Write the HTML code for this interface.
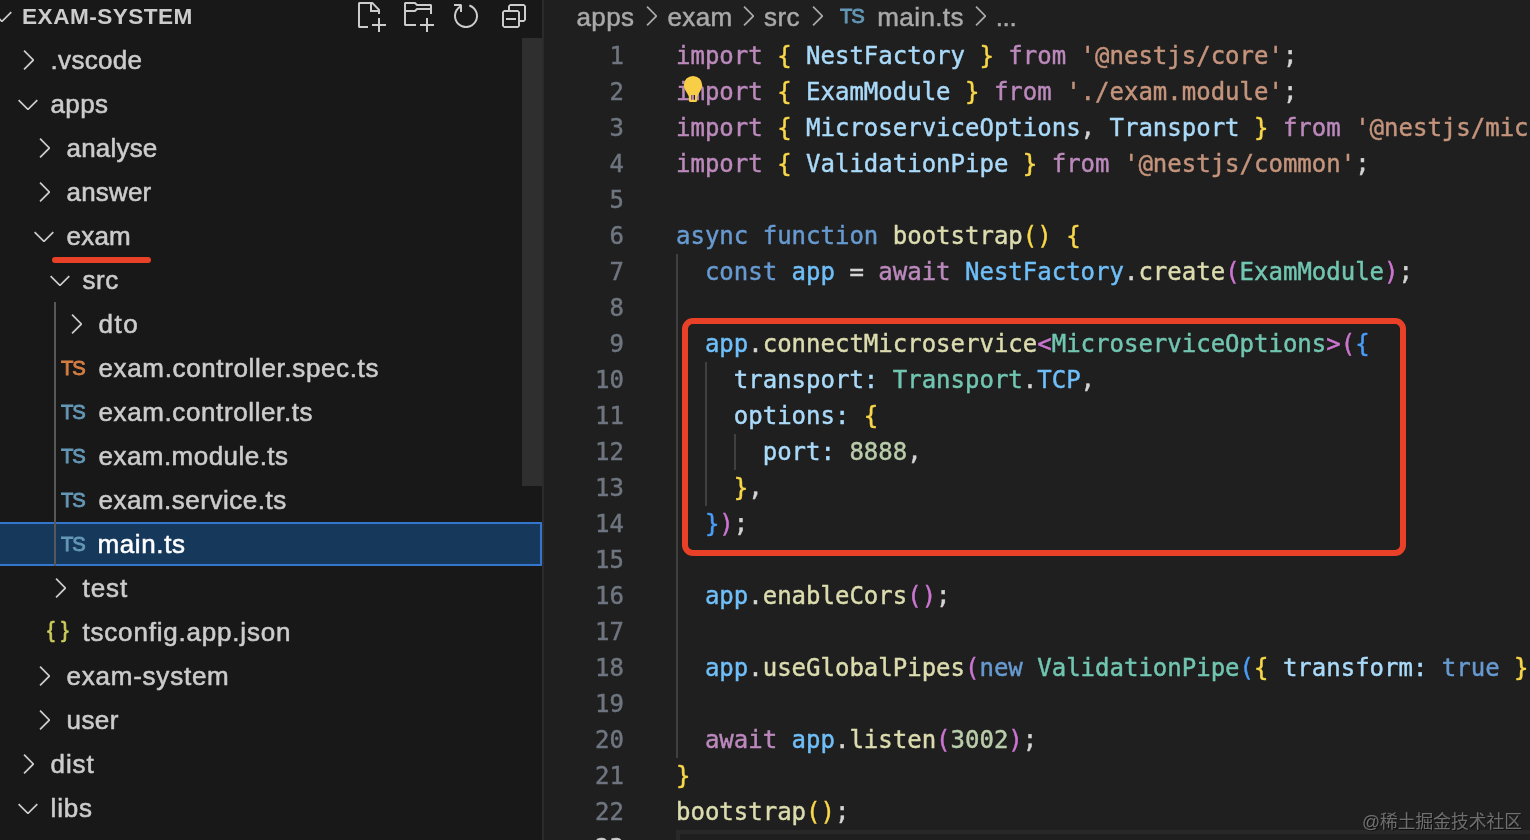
<!DOCTYPE html>
<html lang="en"><head><meta charset="utf-8"><title>main.ts — exam-system</title>
<style>
html,body{margin:0;padding:0}
body{width:1530px;height:840px;overflow:hidden;position:relative;background:#1f1f1f;font-family:"Liberation Sans","DejaVu Sans",sans-serif}
#sidebg{position:absolute;left:0;top:0;width:542px;height:840px;background:#181818}
#side{position:absolute;left:0;top:0;width:542px;height:840px;overflow:hidden}
#sideborder{position:absolute;left:542px;top:0;width:2px;height:840px;background:#2b2b2b}
#scroll{position:absolute;left:522px;top:38px;width:20px;height:448px;background:#2f2f2f}
.ic{position:absolute;display:block}
.lbl{position:absolute;height:44px;line-height:44px;margin-top:0.45px;font-size:26px;color:#cccccc;white-space:pre;-webkit-text-stroke:0.55px #cccccc}
.selt{color:#ffffff;-webkit-text-stroke-color:#ffffff;margin-left:-1px}
.selrow{position:absolute;left:-2px;width:540px;height:40px;background:#16385b;border:2px solid #3376cd}
.tsic{position:absolute;height:44px;line-height:43px;margin-top:0.5px;font-size:20.2px;letter-spacing:-1.2px;white-space:pre;-webkit-text-stroke-width:0.9px}
.jsic{position:absolute;height:44px;line-height:39.6px;font-size:22px;-webkit-text-stroke-width:0.7px;color:#cbcb5a;white-space:pre}
#hdr{position:absolute;left:22.1px;top:-5.5px;height:44px;line-height:44px;font-size:22.6px;font-weight:bold;color:#cccccc;letter-spacing:0.45px;white-space:pre}
#guide{position:absolute;left:54px;top:302px;width:2px;height:264px;background:#585858}
#redline{position:absolute;left:52px;top:256.7px;width:99px;height:6.6px;border-radius:3.3px;background:#e94127}
#ed{position:absolute;left:544px;top:0;width:986px;height:840px;overflow:hidden}
.ln,.cl{position:absolute;height:36px;line-height:36px;font-family:"DejaVu Sans Mono","Liberation Mono",monospace;font-size:24px;white-space:pre;-webkit-text-stroke-width:0.45px}
.ln{left:523.9px;width:100px;text-align:right;color:#6f7680}
.ln.act{color:#cccccc}
.cl{left:676.0px;color:#d4d4d4}
.kw{color:#bc89bd}
.g{color:#f9d849}
.o{color:#cc76d1}
.b{color:#4a9df8}
.v{color:#aadafa}
.s{color:#c5947c}
.f{color:#dcdcaf}
.t{color:#71c6b1}
.st{color:#679ad1}
.n{color:#bacdab}
.c{color:#6fbff9}
.p{color:#d4d4d4}
.ig{position:absolute;width:2px;background:#404040}
#redbox{position:absolute;left:682px;top:317.5px;width:712.4px;height:226px;border:6px solid #e94127;border-radius:11px}
.bc{position:absolute;top:-5px;height:44px;line-height:44px;font-size:26px;color:#a9a9a9;white-space:pre;letter-spacing:0.4px;-webkit-text-stroke:0.5px #a9a9a9}
#wm{position:absolute;left:1362px;top:809.3px;font-family:"Liberation Sans","Noto Sans CJK SC",sans-serif;font-size:17.75px;line-height:26px;color:rgba(255,255,255,0.37);text-shadow:1px 1px 0 rgba(0,0,0,0.55);white-space:pre}
#curline{position:absolute;left:675.6px;top:829.5px;width:900px;height:36px;border:4px solid #282828;box-sizing:border-box}
#root{position:absolute;left:0;top:0;width:1530px;height:840px;will-change:transform}
</style></head><body>
<div id="sidebg"></div>
<div id="root">
<div id="side">
<svg class="ic" style="left:-14px;top:0px" width="32" height="32" viewBox="0 0 16 16"><path fill="#cccccc" d="M7.976 10.072l4.357-4.357.62.618L8.284 11h-.618L3 6.333l.619-.618 4.357 4.357z"/></svg>
<div id="hdr">EXAM-SYSTEM</div>
<svg class="ic" style="left:354px;top:0" width="32" height="32" viewBox="0 0 16 16"><path fill="#cccccc" fill-rule="evenodd" clip-rule="evenodd" d="M9.5 1.1L12.9 4.6L13 5V7H12V6H8V2H3V13H7V14H2.5L2 13.5V1.5L2.5 1H9.2L9.5 1.1ZM9 2V5H11.9L9 2ZM13 16H12V13H9V12H12V9H13V12H16V13H13V16Z"/></svg>
<svg class="ic" style="left:402px;top:0" width="32" height="32" viewBox="0 0 16 16"><path fill="#cccccc" fill-rule="evenodd" clip-rule="evenodd" d="M14.5 2H7.71L6.86 1.15L6.51 1H1.51L1.01 1.5V12.5L1.51 13H7V12H1.99V6H6.49L6.84 5.85L7.7 4.99H14V6.49L13.999 7H15.01V2.5L14.5 2ZM13.99 4H7.49L7.14 4.15L6.28 5.01H2V2.01H6.29L7.14 2.86L7.5 3.01H14L13.99 4ZM13 16H12V13H9V12H12V9H13V12H16V13H13V16Z"/></svg>
<svg class="ic" style="left:450px;top:0" width="32" height="32" viewBox="0 0 16 16"><path fill="#cccccc" fill-rule="evenodd" clip-rule="evenodd" d="M4.681 3H2V2h3.5l.5.5V6H5V4a5 5 0 1 0 4.53-.761l.302-.954A6 6 0 1 1 4.681 3z"/></svg>
<svg class="ic" style="left:498px;top:0" width="32" height="32" viewBox="0 0 16 16"><path fill="#cccccc" d="M9 9H4V10H9V9Z"/><path fill="#cccccc" fill-rule="evenodd" clip-rule="evenodd" d="M5 3L6 2H13L14 3V10L13 11H11V13L10 14H3L2 13V6L3 5H5V3ZM6 5H10L11 6V10H13V3H6V5ZM10 6H3V13H10V6Z"/></svg>
<div id="scroll"></div>
<svg class="ic" style="left:12px;top:44px" width="32" height="32" viewBox="0 0 16 16"><path fill="#cccccc" d="M10.072 8.024L5.715 3.667l.618-.62L11 7.716v.618L6.333 13l-.618-.619 4.357-4.357z"/></svg>
<div class="lbl" id="l0" style="left:50.5px;top:38px;letter-spacing:0.33px">.vscode</div>
<svg class="ic" style="left:12px;top:88px" width="32" height="32" viewBox="0 0 16 16"><path fill="#cccccc" d="M7.976 10.072l4.357-4.357.62.618L8.284 11h-.618L3 6.333l.619-.618 4.357 4.357z"/></svg>
<div class="lbl" id="l1" style="left:50.5px;top:82px;letter-spacing:0.4px">apps</div>
<svg class="ic" style="left:28px;top:132px" width="32" height="32" viewBox="0 0 16 16"><path fill="#cccccc" d="M10.072 8.024L5.715 3.667l.618-.62L11 7.716v.618L6.333 13l-.618-.619 4.357-4.357z"/></svg>
<div class="lbl" id="l2" style="left:66.5px;top:126px;letter-spacing:0.2px">analyse</div>
<svg class="ic" style="left:28px;top:176px" width="32" height="32" viewBox="0 0 16 16"><path fill="#cccccc" d="M10.072 8.024L5.715 3.667l.618-.62L11 7.716v.618L6.333 13l-.618-.619 4.357-4.357z"/></svg>
<div class="lbl" id="l3" style="left:66.5px;top:170px;letter-spacing:0.18px">answer</div>
<svg class="ic" style="left:28px;top:220px" width="32" height="32" viewBox="0 0 16 16"><path fill="#cccccc" d="M7.976 10.072l4.357-4.357.62.618L8.284 11h-.618L3 6.333l.619-.618 4.357 4.357z"/></svg>
<div class="lbl" id="l4" style="left:66.5px;top:214px;letter-spacing:0.23px">exam</div>
<svg class="ic" style="left:44px;top:264px" width="32" height="32" viewBox="0 0 16 16"><path fill="#cccccc" d="M7.976 10.072l4.357-4.357.62.618L8.284 11h-.618L3 6.333l.619-.618 4.357 4.357z"/></svg>
<div class="lbl" id="l5" style="left:82.5px;top:258px;letter-spacing:0.6px">src</div>
<svg class="ic" style="left:60px;top:308px" width="32" height="32" viewBox="0 0 16 16"><path fill="#cccccc" d="M10.072 8.024L5.715 3.667l.618-.62L11 7.716v.618L6.333 13l-.618-.619 4.357-4.357z"/></svg>
<div class="lbl" id="l6" style="left:98.5px;top:302px;letter-spacing:1.5px">dto</div>
<div class="tsic" style="left:61.0px;top:346px;color:#d57e44">TS</div>
<div class="lbl" id="l7" style="left:98.5px;top:346px;letter-spacing:0.64px">exam.controller.spec.ts</div>
<div class="tsic" style="left:61.0px;top:390px;color:#6398b7">TS</div>
<div class="lbl" id="l8" style="left:98.5px;top:390px;letter-spacing:0.61px">exam.controller.ts</div>
<div class="tsic" style="left:61.0px;top:434px;color:#6398b7">TS</div>
<div class="lbl" id="l9" style="left:98.5px;top:434px;letter-spacing:0.46px">exam.module.ts</div>
<div class="tsic" style="left:61.0px;top:478px;color:#6398b7">TS</div>
<div class="lbl" id="l10" style="left:98.5px;top:478px;letter-spacing:0.51px">exam.service.ts</div>
<div class="selrow" style="top:522px"></div>
<div class="tsic" style="left:61.0px;top:522px;color:#6398b7">TS</div>
<div class="lbl selt" id="l11" style="left:98.5px;top:522px;letter-spacing:0.62px">main.ts</div>
<svg class="ic" style="left:44px;top:572px" width="32" height="32" viewBox="0 0 16 16"><path fill="#cccccc" d="M10.072 8.024L5.715 3.667l.618-.62L11 7.716v.618L6.333 13l-.618-.619 4.357-4.357z"/></svg>
<div class="lbl" id="l12" style="left:82.5px;top:566px;letter-spacing:0.93px">test</div>
<div class="jsic" style="left:47.3px;top:610px">{<span style="margin-left:6.5px">}</span></div>
<div class="lbl" id="l13" style="left:82.5px;top:610px;letter-spacing:0.8px">tsconfig.app.json</div>
<svg class="ic" style="left:28px;top:660px" width="32" height="32" viewBox="0 0 16 16"><path fill="#cccccc" d="M10.072 8.024L5.715 3.667l.618-.62L11 7.716v.618L6.333 13l-.618-.619 4.357-4.357z"/></svg>
<div class="lbl" id="l14" style="left:66.5px;top:654px;letter-spacing:0.77px">exam-system</div>
<svg class="ic" style="left:28px;top:704px" width="32" height="32" viewBox="0 0 16 16"><path fill="#cccccc" d="M10.072 8.024L5.715 3.667l.618-.62L11 7.716v.618L6.333 13l-.618-.619 4.357-4.357z"/></svg>
<div class="lbl" id="l15" style="left:66.5px;top:698px;letter-spacing:0.43px">user</div>
<svg class="ic" style="left:12px;top:748px" width="32" height="32" viewBox="0 0 16 16"><path fill="#cccccc" d="M10.072 8.024L5.715 3.667l.618-.62L11 7.716v.618L6.333 13l-.618-.619 4.357-4.357z"/></svg>
<div class="lbl" id="l16" style="left:50.5px;top:742px;letter-spacing:0.93px">dist</div>
<svg class="ic" style="left:12px;top:792px" width="32" height="32" viewBox="0 0 16 16"><path fill="#cccccc" d="M7.976 10.072l4.357-4.357.62.618L8.284 11h-.618L3 6.333l.619-.618 4.357 4.357z"/></svg>
<div class="lbl" id="l17" style="left:50.5px;top:786px;letter-spacing:0.87px">libs</div>
<div id="guide"></div>
<div id="redline"></div>
</div>
<div id="sideborder"></div>
<div class="bc" style="left:576.5px">apps</div>
<div class="bc" style="left:667.5px">exam</div>
<div class="bc" style="left:764px">src</div>
<div class="bc" style="left:877.3px">main.ts</div>
<div class="bc" style="left:995.8px;letter-spacing:-0.4px">...</div>
<div class="tsic" style="left:840px;top:-6px;color:#6398b7">TS</div>
<svg class="ic" style="left:635px;top:0px" width="32" height="32" viewBox="0 0 16 16"><path fill="#a9a9a9" d="M10.072 8.024L5.715 3.667l.618-.62L11 7.716v.618L6.333 13l-.618-.619 4.357-4.357z"/></svg><svg class="ic" style="left:732px;top:0px" width="32" height="32" viewBox="0 0 16 16"><path fill="#a9a9a9" d="M10.072 8.024L5.715 3.667l.618-.62L11 7.716v.618L6.333 13l-.618-.619 4.357-4.357z"/></svg><svg class="ic" style="left:801px;top:0px" width="32" height="32" viewBox="0 0 16 16"><path fill="#a9a9a9" d="M10.072 8.024L5.715 3.667l.618-.62L11 7.716v.618L6.333 13l-.618-.619 4.357-4.357z"/></svg><svg class="ic" style="left:963.7px;top:0px" width="32" height="32" viewBox="0 0 16 16"><path fill="#a9a9a9" d="M10.072 8.024L5.715 3.667l.618-.62L11 7.716v.618L6.333 13l-.618-.619 4.357-4.357z"/></svg>
<div class="ig" style="left:676px;top:253.5px;height:504px"></div>
<div class="ig" style="left:705px;top:361.5px;height:144px"></div>
<div class="ig" style="left:734px;top:433.5px;height:36px"></div>
<div id="curline"></div>
<div class="ln" style="top:38.0px">1</div><div class="cl" style="top:38.0px"><span class="kw">import</span><span class="p"> </span><span class="g">{</span><span class="v"> NestFactory </span><span class="g">}</span><span class="kw"> from </span><span class="s">'@nestjs/core'</span><span class="p">;</span></div>
<div class="ln" style="top:74.0px">2</div><div class="cl" style="top:74.0px"><span class="kw">import</span><span class="p"> </span><span class="g">{</span><span class="v"> ExamModule </span><span class="g">}</span><span class="kw"> from </span><span class="s">'./exam.module'</span><span class="p">;</span></div>
<div class="ln" style="top:110.0px">3</div><div class="cl" style="top:110.0px"><span class="kw">import</span><span class="p"> </span><span class="g">{</span><span class="v"> MicroserviceOptions</span><span class="p">,</span><span class="v"> Transport </span><span class="g">}</span><span class="kw"> from </span><span class="s">'@nestjs/microservices'</span><span class="p">;</span></div>
<div class="ln" style="top:146.0px">4</div><div class="cl" style="top:146.0px"><span class="kw">import</span><span class="p"> </span><span class="g">{</span><span class="v"> ValidationPipe </span><span class="g">}</span><span class="kw"> from </span><span class="s">'@nestjs/common'</span><span class="p">;</span></div>
<div class="ln" style="top:182.0px">5</div><div class="cl" style="top:182.0px"></div>
<div class="ln" style="top:218.0px">6</div><div class="cl" style="top:218.0px"><span class="st">async function </span><span class="f">bootstrap</span><span class="g">()</span><span class="p"> </span><span class="g">{</span></div>
<div class="ln" style="top:254.0px">7</div><div class="cl" style="top:254.0px"><span class="st">  const </span><span class="c">app</span><span class="p"> = </span><span class="kw">await </span><span class="c">NestFactory</span><span class="p">.</span><span class="f">create</span><span class="o">(</span><span class="t">ExamModule</span><span class="o">)</span><span class="p">;</span></div>
<div class="ln" style="top:290.0px">8</div><div class="cl" style="top:290.0px"></div>
<div class="ln" style="top:326.0px">9</div><div class="cl" style="top:326.0px"><span class="c">  app</span><span class="p">.</span><span class="f">connectMicroservice</span><span class="o">&lt;</span><span class="t">MicroserviceOptions</span><span class="o">&gt;(</span><span class="b">{</span></div>
<div class="ln" style="top:362.0px">10</div><div class="cl" style="top:362.0px"><span class="v">    transport:</span><span class="p"> </span><span class="t">Transport</span><span class="p">.</span><span class="c">TCP</span><span class="p">,</span></div>
<div class="ln" style="top:398.0px">11</div><div class="cl" style="top:398.0px"><span class="v">    options:</span><span class="p"> </span><span class="g">{</span></div>
<div class="ln" style="top:434.0px">12</div><div class="cl" style="top:434.0px"><span class="v">      port:</span><span class="p"> </span><span class="n">8888</span><span class="p">,</span></div>
<div class="ln" style="top:470.0px">13</div><div class="cl" style="top:470.0px"><span class="g">    }</span><span class="p">,</span></div>
<div class="ln" style="top:506.0px">14</div><div class="cl" style="top:506.0px"><span class="b">  }</span><span class="o">)</span><span class="p">;</span></div>
<div class="ln" style="top:542.0px">15</div><div class="cl" style="top:542.0px"></div>
<div class="ln" style="top:578.0px">16</div><div class="cl" style="top:578.0px"><span class="c">  app</span><span class="p">.</span><span class="f">enableCors</span><span class="o">()</span><span class="p">;</span></div>
<div class="ln" style="top:614.0px">17</div><div class="cl" style="top:614.0px"></div>
<div class="ln" style="top:650.0px">18</div><div class="cl" style="top:650.0px"><span class="c">  app</span><span class="p">.</span><span class="f">useGlobalPipes</span><span class="o">(</span><span class="st">new </span><span class="t">ValidationPipe</span><span class="b">(</span><span class="g">{</span><span class="v"> transform:</span><span class="p"> </span><span class="st">true </span><span class="g">}</span><span class="b">)</span><span class="o">)</span><span class="p">;</span></div>
<div class="ln" style="top:686.0px">19</div><div class="cl" style="top:686.0px"></div>
<div class="ln" style="top:722.0px">20</div><div class="cl" style="top:722.0px"><span class="kw">  await </span><span class="c">app</span><span class="p">.</span><span class="f">listen</span><span class="o">(</span><span class="n">3002</span><span class="o">)</span><span class="p">;</span></div>
<div class="ln" style="top:758.0px">21</div><div class="cl" style="top:758.0px"><span class="g">}</span></div>
<div class="ln" style="top:794.0px">22</div><div class="cl" style="top:794.0px"><span class="f">bootstrap</span><span class="g">()</span><span class="p">;</span></div>
<div class="ln act" style="top:830.0px">23</div><div class="cl" style="top:830.0px"></div>
<svg class="ic" style="left:680px;top:72px" width="26" height="32" viewBox="0 0 26 32"><path fill="#f7ce46" fill-rule="evenodd" d="M13 3.9a9.2 9.2 0 0 1 9.2 9.2c0 3.2-1.7 5.6-3.3 8.2-1 1.6-1.8 2.9-1.8 4.7v2.4a1.6 1.6 0 0 1-1.6 1.6h-5a1.6 1.6 0 0 1-1.6-1.6v-2.4c0-1.8-.8-3.1-1.8-4.7C5.500 18.700 3.800 16.300 3.800 13.100A9.2 9.200 0 0 1 13 3.900zM11 23.100v4.600h4v-4.600z"/></svg>
<div id="redbox"></div>
<div id="wm">@稀土掘金技术社区</div>
</div>
</body></html>
